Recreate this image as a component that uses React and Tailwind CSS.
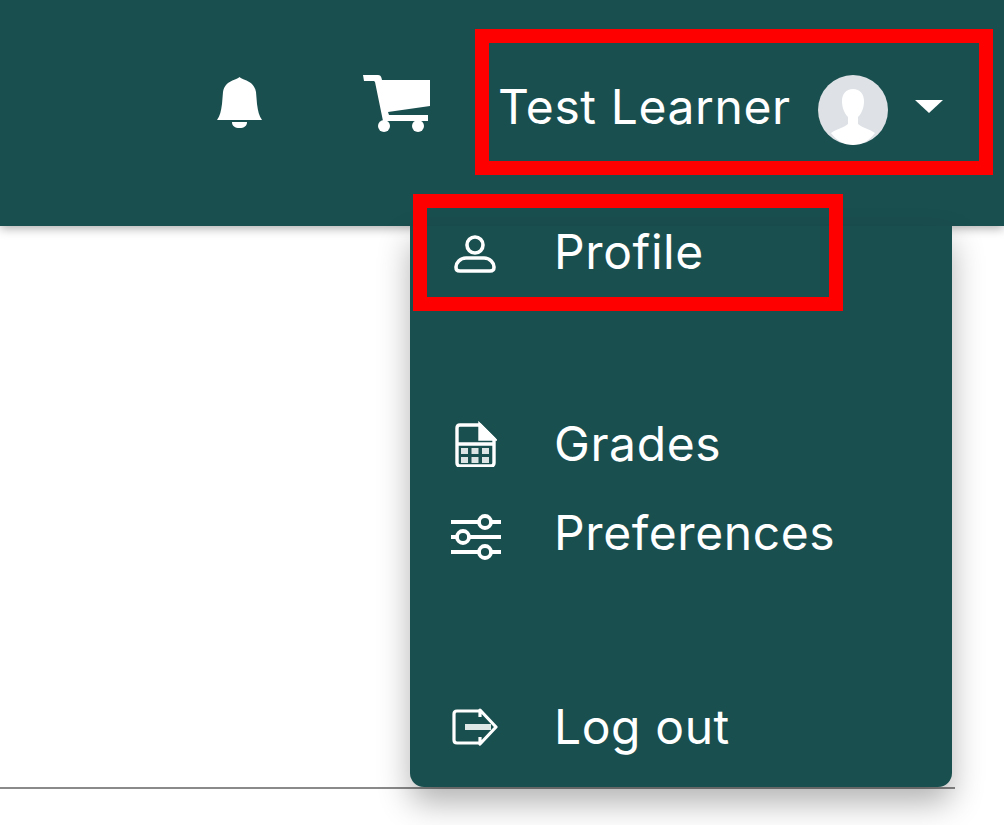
import React from 'react';

const BellIcon = () => (
  <svg viewBox="0 0 45 51" className="w-[45px] h-[51px] mt-[2px] mr-[101px] shrink-0" fill="currentColor">
    <path d="M22.500 0C25 3 37 3 39 15l1 12c1 7 2 12 5 16H0c3-4 4-9 5-16l1-12C8 3 20 3 22.500 0z" />
    <path d="M15 45h15c0 4-3 6-7.500 6S15 49 15 45z" />
  </svg>
);

const CartIcon = () => (
  <svg viewBox="0 0 67 57" className="w-[67px] h-[57px] mr-[68px] shrink-0" fill="currentColor">
    <path d="M0 0h15c2 0 3 1 3.500 3l.5 2h48v26l-42 6 1 3h39v6H20L12 7 11 6H1z" />
    <circle cx="21" cy="51" r="6" />
    <circle cx="55" cy="51" r="6" />
  </svg>
);

const ProfileIcon = () => (
  <svg viewBox="0 0 44 44" className="w-[44px] h-[44px]" fill="none" stroke="currentColor" strokeWidth="3.6">
    <circle cx="22" cy="15" r="8" />
    <path d="M13 28h18c6 0 10 5 10 9 0 3-1 4-4 4H7c-3 0-4-1-4-4 0-4 4-9 10-9z" />
  </svg>
);

const GradesIcon = () => (
  <svg viewBox="0 0 44 46" className="w-[44px] h-[46px]" fill="none" stroke="currentColor" strokeWidth="3.4">
    <path d="M4 7c0-1.500 1-3 3-3h20l14 14v24c0 2-1.500 3-3 3H7c-2 0-3-1-3-3z" />
    <path d="M27 4v14h14z" fill="currentColor" />
    <path d="M5 23h35" />
    <g stroke="none" fill="currentColor" opacity="0.85">
      <rect x="8" y="27" width="7" height="6" /><rect x="18.500" y="27" width="7" height="6" /><rect x="29" y="27" width="7" height="6" />
      <rect x="8" y="36" width="7" height="6" /><rect x="18.500" y="36" width="7" height="6" /><rect x="29" y="36" width="7" height="6" />
    </g>
  </svg>
);

const SlidersIcon = () => (
  <svg viewBox="0 0 52 46" className="w-[52px] h-[46px] -ml-[3px] mt-[8px]" fill="none" stroke="currentColor" strokeWidth="3.8">
    <path d="M1 8h28M42 8h9M1 23h6M20 23h31M1 38h28M42 38h9" />
    <circle cx="35" cy="8" r="6" />
    <circle cx="13" cy="23" r="6" />
    <circle cx="35" cy="38" r="6" />
  </svg>
);

const LogoutIcon = () => (
  <svg viewBox="0 0 48 38" className="w-[48px] h-[38px] -ml-[2px]" fill="none" stroke="currentColor" strokeWidth="3.2" strokeLinejoin="round">
    <path d="M29 3H6C4 3 3 4 3 6v26c0 2 1 3 3 3h23" />
    <path d="M29 9V2l16 17-16 17v-7" />
    <path d="M14 19h26" stroke="#dfe7e7" strokeWidth="6" />
  </svg>
);

const Avatar = () => (
  <div className="w-[70px] h-[70px] rounded-full bg-[#dee2e6] overflow-hidden shrink-0">
    <svg viewBox="0 0 70 70" className="w-full h-full" fill="#ffffff">
      <path d="M35 14c-7 0-11 5-11 12 0 6 2 12 6 16v7c-4 4-12 5-17 9 6 8 13 12 22 12s16-4 22-12c-5-4-13-5-17-9v-7c4-4 6-10 6-16 0-7-4-12-11-12z" />
    </svg>
  </div>
);

const MenuRow = ({ icon, label, className }) => (
  <div className={`flex items-center h-[46px] ${className}`}>
    <div className="w-[144px] pl-[43px] shrink-0 flex items-center">{icon}</div>
    <span>{label}</span>
  </div>
);

export default function App() {
  return (
    <div className="relative min-h-[825px] bg-white overflow-hidden font-['Inter',sans-serif] text-white text-[48px] tracking-[0.6px]">
      <header className="relative h-[226px] bg-[#1a4f4f] shadow-[0_2px_10px_rgba(0,0,0,0.35)] flex justify-end pt-[75px] pr-[61px]">
        <div className="flex items-start">
          <BellIcon />
          <CartIcon />
          <span className="leading-[64px] mr-[27px] w-[293px] whitespace-nowrap">Test Learner</span>
          <Avatar />
          <div className="mt-[25px] ml-[27px] w-0 h-0 border-x-[14px] border-x-transparent border-t-[13px] border-t-white" />
        </div>
        {/* red annotation boxes */}
        <div className="absolute left-[475px] top-[29px] w-[518px] h-[146px] border-[14px] border-[#ff0000]" />
      </header>

      <div className="absolute left-[410px] top-[226px] w-[542px] h-[561px] bg-[#1a4f4f] rounded-b-[14px] shadow-[0_16px_32px_rgba(0,0,0,0.3)] pt-[3px]">
        <MenuRow icon={<ProfileIcon />} label="Profile" />
        <MenuRow icon={<GradesIcon />} label="Grades" className="mt-[146px]" />
        <MenuRow icon={<SlidersIcon />} label="Preferences" className="mt-[43px]" />
        <MenuRow icon={<LogoutIcon />} label="Log out" className="mt-[148px]" />
      </div>
      <div className="absolute left-[413px] top-[194px] w-[430px] h-[117px] border-[14px] border-[#ff0000]" />

      <div className="w-[955px] h-[2px] bg-[#8a8a8a] mt-[561px]" />
    </div>
  );
}
